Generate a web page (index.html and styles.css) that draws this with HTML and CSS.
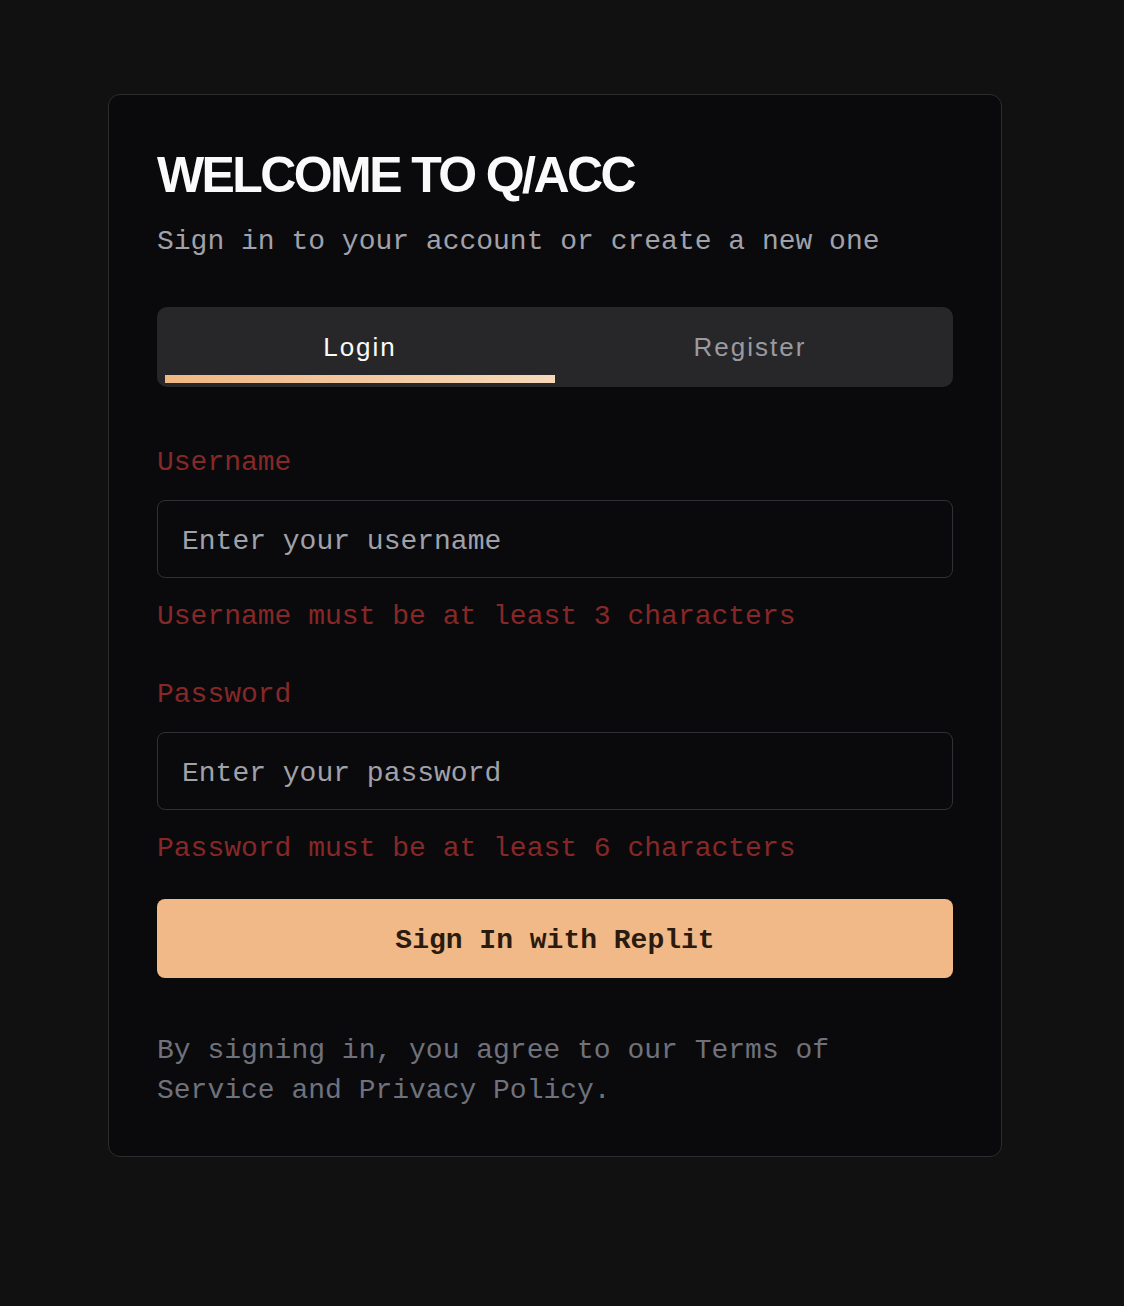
FILE: index.html
```html
<!DOCTYPE html>
<html lang="en">
<head>
<meta charset="utf-8">
<title>Welcome to Q/ACC</title>
<link rel="stylesheet" href="styles.css">
</head>
<body>
<main class="page">
  <section class="card">
    <h1 class="title">WELCOME TO Q/ACC</h1>
    <p class="subtitle">Sign in to your account or create a new one</p>

    <div class="tabs">
      <button class="tab tab-active" type="button">
        <span class="tab-label">Login</span>
        <span class="tab-bar"></span>
      </button>
      <button class="tab" type="button">
        <span class="tab-label">Register</span>
        <span class="tab-bar"></span>
      </button>
    </div>

    <form class="form">
      <div class="field">
        <label class="label" for="username">Username</label>
        <input class="input" id="username" type="text" placeholder="Enter your username">
        <p class="error">Username must be at least 3 characters</p>
      </div>
      <div class="field field-second">
        <label class="label" for="password">Password</label>
        <input class="input" id="password" type="password" placeholder="Enter your password">
        <p class="error">Password must be at least 6 characters</p>
      </div>
      <button class="submit" type="button">Sign In with Replit</button>
    </form>

    <p class="legal">By signing in, you agree to our Terms of Service and Privacy Policy.</p>
  </section>
</main>
</body>
</html>
```

FILE: styles.css
```css
html, body {
  margin: 0;
  padding: 0;
  background: #111111;
}

.page {
  min-height: 1306px;
  padding-top: 94px;
  padding-left: 108px;
  box-sizing: border-box;
}

.card {
  width: 894px;
  box-sizing: border-box;
  background: #0a0a0c;
  border: 1px solid #2d2d30;
  border-radius: 12px;
  padding: 55px 48px 45px 48px;
  font-family: "Liberation Mono", "DejaVu Sans Mono", monospace;
  font-size: 28px;
}

.title {
  margin: 0;
  font-family: "Liberation Sans", Arial, sans-serif;
  font-weight: 700;
  font-size: 50px;
  line-height: 50px;
  letter-spacing: -2.6px;
  color: #fafafa;
}

.subtitle {
  margin: 22px 0 0 0;
  line-height: 40px;
  color: #a1a1aa;
}

.tabs {
  margin-top: 45px;
  display: grid;
  grid-template-columns: 1fr 1fr;
  padding: 4px 8px;
  background: #27272a;
  border-radius: 10px;
}

.tab {
  display: flex;
  flex-direction: column;
  align-items: stretch;
  padding: 16px 0 0 0;
  margin: 0;
  border: 0;
  background: transparent;
  font-family: "Liberation Sans", Arial, sans-serif;
  font-size: 26px;
  letter-spacing: 2px;
  color: #9a9aa1;
  cursor: pointer;
}

.tab-label {
  line-height: 40px;
  text-align: center;
}

.tab-bar {
  display: block;
  height: 8px;
  margin-top: 8px;
}

.tab-active {
  color: #fafafa;
}

.tab-active .tab-bar {
  background: linear-gradient(90deg, #f0b783, #f6d8b9);
}

.form {
  margin-top: 56px;
  display: flex;
  flex-direction: column;
}

.field {
  display: flex;
  flex-direction: column;
}

.field-second {
  margin-top: 38px;
}

.label {
  line-height: 40px;
  color: #862828;
}

.input {
  margin-top: 17px;
  height: 78px;
  box-sizing: border-box;
  padding: 4px 24px 0 24px;
  background: #0a0a0c;
  border: 1px solid #313135;
  border-radius: 8px;
  font-family: "Liberation Mono", "DejaVu Sans Mono", monospace;
  font-size: 28px;
  color: #e4e4e7;
  outline: none;
}

.input::placeholder {
  color: #a1a1aa;
  opacity: 1;
}

.error {
  margin: 19px 0 0 0;
  line-height: 40px;
  color: #862828;
}

.submit {
  margin-top: 30px;
  height: 79px;
  padding: 4px 0 0 0;
  border: 0;
  border-radius: 8px;
  background: #f0b987;
  color: #2a1b10;
  font-family: "Liberation Mono", "DejaVu Sans Mono", monospace;
  font-size: 28px;
  font-weight: 700;
  cursor: pointer;
}

.legal {
  margin: 53px 0 0 0;
  width: 690px;
  line-height: 40px;
  color: #6f727c;
}
```
